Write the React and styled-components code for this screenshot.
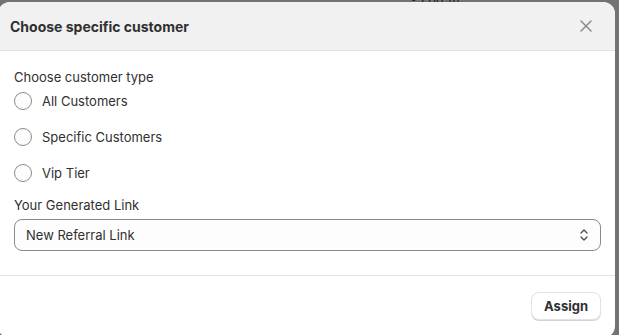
import React from "react";
import styled, { createGlobalStyle } from "styled-components";

const GlobalStyle = createGlobalStyle`
  html, body {
    margin: 0;
    padding: 0;
    background: #737373;
    font-family: Inter, "Noto Sans", sans-serif;
    -webkit-font-smoothing: antialiased;
  }
`;

const Backdrop = styled.div`
  position: relative;
  width: 619px;
  height: 335px;
  overflow: hidden;
  background: #737373;
`;

const PageText = styled.div`
  position: absolute;
  top: -9px;
  left: 410px;
  font-size: 13px;
  color: #1e1e1e;
`;

const Modal = styled.div`
  position: absolute;
  top: 2px;
  left: -2px;
  width: 617px;
  height: 336px;
  background: #fff;
  border-radius: 12px;
  overflow: hidden;
  display: flex;
  flex-direction: column;
`;

const Header = styled.div`
  height: 48px;
  display: flex;
  align-items: center;
  justify-content: space-between;
  padding: 0 19px 0 12px;
  background: #f1f1f1;
  border-bottom: 1px solid #e3e3e3;
`;

const Title = styled.h2`
  margin: 0;
  font-size: 14px;
  font-weight: 650;
  color: #303030;
`;

const CloseButton = styled.button`
  border: 0;
  background: transparent;
  padding: 0;
  width: 20px;
  height: 20px;
  display: flex;
  align-items: center;
  justify-content: center;
  cursor: pointer;
`;

const Body = styled.div`
  padding: 16px 14px 24px 16px;
  border-bottom: 1px solid #e3e3e3;
  display: flex;
  flex-direction: column;
`;

const Label = styled.div`
  font-size: 13px;
  line-height: 20px;
  color: #303030;
`;

const RadioList = styled.div`
  display: flex;
  flex-direction: column;
  gap: 16px;
  margin: 4px 0 12px;
`;

const RadioRow = styled.label`
  display: flex;
  align-items: center;
  gap: 10px;
  height: 20px;
  font-size: 13px;
  color: #303030;
  cursor: pointer;
`;

const RadioCircle = styled.span`
  width: 16px;
  height: 16px;
  border-radius: 50%;
  border: 1px solid #8a8a8a;
  background: #fdfdfd;
  flex: none;
`;

const Select = styled.div`
  margin-top: 4px;
  height: 30px;
  border: 1px solid #8a8a8a;
  border-radius: 8px;
  background: #fdfdfd;
  display: flex;
  align-items: center;
  justify-content: space-between;
  padding: 0 10px 0 11px;
  font-size: 13px;
  color: #303030;
`;

const Footer = styled.div`
  flex: 1;
  display: flex;
  justify-content: flex-end;
  align-items: flex-start;
  padding: 16px 14px;
`;

const Button = styled.button`
  height: 28px;
  padding: 0 12px;
  border: 1px solid #e3e3e3;
  border-radius: 8px;
  background: #fff;
  box-shadow: 0 1px 0 #d4d4d4;
  font-family: inherit;
  font-size: 13px;
  font-weight: 650;
  color: #303030;
  cursor: pointer;
`;

const options = ["All Customers", "Specific Customers", "Vip Tier"];

const App = () => (
  <Backdrop>
    <GlobalStyle />
    <PageText>• Lorem</PageText>
    <Modal>
      <Header>
        <Title>Choose specific customer</Title>
        <CloseButton aria-label="Close">
          <svg width="12" height="12" viewBox="0 0 12 12">
            <path d="M1 1L11 11M11 1L1 11" stroke="#8a8a8a" strokeWidth="1.5" strokeLinecap="round" />
          </svg>
        </CloseButton>
      </Header>
      <Body>
        <Label>Choose customer type</Label>
        <RadioList>
          {options.map((o) => (
            <RadioRow key={o}>
              <RadioCircle />
              {o}
            </RadioRow>
          ))}
        </RadioList>
        <Label>Your Generated Link</Label>
        <Select>
          New Referral Link
          <svg width="12" height="16" viewBox="0 0 12 16">
            <path d="M3 6L6 3L9 6M3 10L6 13L9 10" stroke="#4a4a4a" strokeWidth="1.3" fill="none" strokeLinecap="round" strokeLinejoin="round" />
          </svg>
        </Select>
      </Body>
      <Footer>
        <Button>Assign</Button>
      </Footer>
    </Modal>
  </Backdrop>
);

export default App;
